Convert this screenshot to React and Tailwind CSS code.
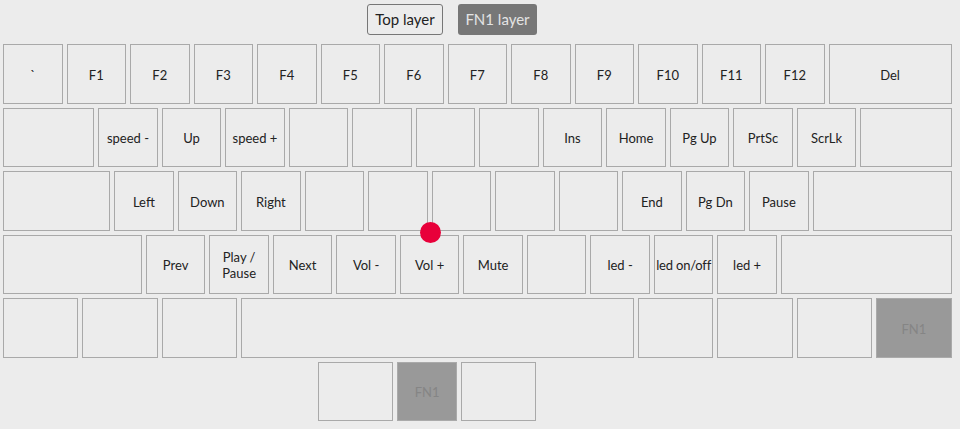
import React from 'react';

// keyboard rows; w = key width class, label optional, fn = highlighted layer key
const rows = [
  [
    { w: 'w-[63.5px]', label: '`' },
    { w: 'w-[63.5px]', label: 'F1' },
    { w: 'w-[63.5px]', label: 'F2' },
    { w: 'w-[63.5px]', label: 'F3' },
    { w: 'w-[63.5px]', label: 'F4' },
    { w: 'w-[63.5px]', label: 'F5' },
    { w: 'w-[63.5px]', label: 'F6' },
    { w: 'w-[63.5px]', label: 'F7' },
    { w: 'w-[63.5px]', label: 'F8' },
    { w: 'w-[63.5px]', label: 'F9' },
    { w: 'w-[63.5px]', label: 'F10' },
    { w: 'w-[63.5px]', label: 'F11' },
    { w: 'w-[63.5px]', label: 'F12' },
    { w: 'w-[127px]', label: 'Del' },
  ],
  [
    { w: 'w-[95.25px]' },
    { w: 'w-[63.5px]', label: 'speed -' },
    { w: 'w-[63.5px]', label: 'Up' },
    { w: 'w-[63.5px]', label: 'speed +' },
    { w: 'w-[63.5px]' },
    { w: 'w-[63.5px]' },
    { w: 'w-[63.5px]' },
    { w: 'w-[63.5px]' },
    { w: 'w-[63.5px]', label: 'Ins' },
    { w: 'w-[63.5px]', label: 'Home' },
    { w: 'w-[63.5px]', label: 'Pg Up' },
    { w: 'w-[63.5px]', label: 'PrtSc' },
    { w: 'w-[63.5px]', label: 'ScrLk' },
    { w: 'w-[95.25px]' },
  ],
  [
    { w: 'w-[111.125px]' },
    { w: 'w-[63.5px]', label: 'Left' },
    { w: 'w-[63.5px]', label: 'Down' },
    { w: 'w-[63.5px]', label: 'Right' },
    { w: 'w-[63.5px]' },
    { w: 'w-[63.5px]' },
    { w: 'w-[63.5px]' },
    { w: 'w-[63.5px]' },
    { w: 'w-[63.5px]' },
    { w: 'w-[63.5px]', label: 'End' },
    { w: 'w-[63.5px]', label: 'Pg Dn' },
    { w: 'w-[63.5px]', label: 'Pause' },
    { w: 'w-[142.875px]' },
  ],
  [
    { w: 'w-[142.875px]' },
    { w: 'w-[63.5px]', label: 'Prev' },
    { w: 'w-[63.5px]', label: 'Play / Pause' },
    { w: 'w-[63.5px]', label: 'Next' },
    { w: 'w-[63.5px]', label: 'Vol -' },
    { w: 'w-[63.5px]', label: 'Vol +' },
    { w: 'w-[63.5px]', label: 'Mute' },
    { w: 'w-[63.5px]' },
    { w: 'w-[63.5px]', label: 'led -' },
    { w: 'w-[63.5px]', label: 'led on/off', nowrap: true },
    { w: 'w-[63.5px]', label: 'led +' },
    { w: 'w-[174.625px]' },
  ],
  [
    { w: 'w-[79.375px]' },
    { w: 'w-[79.375px]' },
    { w: 'w-[79.375px]' },
    { w: 'w-[396.875px]' },
    { w: 'w-[79.375px]' },
    { w: 'w-[79.375px]' },
    { w: 'w-[79.375px]' },
    { w: 'w-[79.375px]', label: 'FN1', fn: true },
  ],
];

const bottomRow = [
  { w: 'w-[79.375px]' },
  { w: 'w-[63.5px]', label: 'FN1', fn: true },
  { w: 'w-[79.375px]' },
];

function Key({ k }) {
  return (
    <div className={`${k.w} h-[63.5px] p-[2px] shrink-0`}>
      <div
        className={`w-full h-full border flex items-center justify-center text-center leading-[16px] text-[13px] pt-[2px] ${
          k.nowrap ? 'whitespace-nowrap tracking-[-0.2px]' : 'px-[1px]'
        } ${
          k.fn
            ? 'bg-[#999999] border-[#aaaaaa] text-[#858585]'
            : 'bg-[#ececec] border-[#a9a9a9] text-[#222222]'
        }`}
      >
        {k.label}
      </div>
    </div>
  );
}

export default function App() {
  return (
    <div
      className="relative w-[960px] h-[429px] bg-[#ececec] overflow-hidden"
      style={{ fontFamily: 'Lato, "Noto Sans", sans-serif' }}
    >
      {/* Layer tabs */}
      <div className="flex gap-[15px] pl-[367px] pt-[4px]">
        <button className="h-[31px] w-[76px] border-[1.5px] border-[#777777] rounded-[3px] text-[15px] text-[#222222] bg-[#ececec]">
          Top layer
        </button>
        <button className="h-[31px] w-[79px] rounded-[3px] text-[15px] text-[#e4e4e4] bg-[#777777]">
          FN1 layer
        </button>
      </div>

      {/* Keyboard */}
      <div className="ml-[1px] mt-[7px] flex flex-col">
        {rows.map((row, i) => (
          <div key={i} className="flex">
            {row.map((k, j) => (
              <Key key={j} k={k} />
            ))}
          </div>
        ))}
        <div className="flex">
          <div className="w-[315px] shrink-0" />
          {bottomRow.map((k, j) => (
            <Key key={j} k={k} />
          ))}
        </div>
      </div>

      {/* cursor dot */}
      <div className="absolute left-[420px] top-[222px] w-[21px] h-[21px] rounded-full bg-[#e8003a]" />
    </div>
  );
}
